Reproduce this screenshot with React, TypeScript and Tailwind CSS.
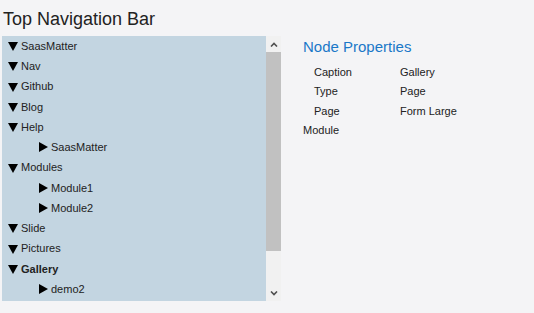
import { Fragment } from 'react';

type Node = { label: string; depth: number; open: boolean; bold?: boolean };

const nodes: Node[] = [
  { label: 'SaasMatter', depth: 0, open: true },
  { label: 'Nav', depth: 0, open: true },
  { label: 'Github', depth: 0, open: true },
  { label: 'Blog', depth: 0, open: true },
  { label: 'Help', depth: 0, open: true },
  { label: 'SaasMatter', depth: 1, open: false },
  { label: 'Modules', depth: 0, open: true },
  { label: 'Module1', depth: 1, open: false },
  { label: 'Module2', depth: 1, open: false },
  { label: 'Slide', depth: 0, open: true },
  { label: 'Pictures', depth: 0, open: true },
  { label: 'Gallery', depth: 0, open: true, bold: true },
  { label: 'demo2', depth: 1, open: false },
];

const props = [
  ['Caption', 'Gallery'],
  ['Type', 'Page'],
  ['Page', 'Form Large'],
];

const App = () => {
  return (
    <div className="min-h-screen w-[534px] h-[313px] bg-[#f4f4f6] text-[#222] font-['Liberation_Sans',Arial,sans-serif] overflow-hidden">
      {/* Header */}
      <h1 className="text-[18px] leading-[22px] pl-[3px] pt-[8px] h-[36px]">Top Navigation Bar</h1>

      <div className="flex">
        {/* Tree */}
        <div className="ml-[2px] flex h-[265px]">
          <div className="w-[264px] bg-[#c3d5e1] overflow-hidden text-[11px]">
            <ul>
              {nodes.map((n, i) => (
                <li
                  key={i}
                  className={`flex items-center h-[20.25px] ${n.depth ? 'pl-[37px]' : 'pl-[6px]'} ${n.bold ? 'font-bold' : ''}`}
                >
                  {n.open ? (
                    <svg width="10" height="9" viewBox="0 0 10 9" className="mr-[3px] mt-[1px] shrink-0">
                      <path d="M0 0 H10 L5 9 Z" fill="#000" />
                    </svg>
                  ) : (
                    <svg width="9" height="10" viewBox="0 0 9 10" className="mr-[3px] shrink-0">
                      <path d="M0 0 V10 L9 5 Z" fill="#000" />
                    </svg>
                  )}
                  <span>{n.label}</span>
                </li>
              ))}
            </ul>
          </div>
          {/* Scrollbar */}
          <div className="w-[15px] bg-[#f1f1f1] flex flex-col">
            <div className="h-[16px] flex items-center justify-center">
              <svg width="8" height="5" viewBox="0 0 8 5">
                <path d="M1 4.5 L4 1.5 L7 4.5" stroke="#505050" strokeWidth="1.6" fill="none" />
              </svg>
            </div>
            <div className="h-[199px] bg-[#c1c1c1]" />
            <div className="flex-1" />
            <div className="h-[16px] flex items-center justify-center">
              <svg width="8" height="5" viewBox="0 0 8 5">
                <path d="M1 0.5 L4 3.5 L7 0.5" stroke="#505050" strokeWidth="1.6" fill="none" />
              </svg>
            </div>
          </div>
        </div>

        {/* Properties */}
        <div className="ml-[22px] text-[11px]">
          <h2 className="text-[15px] leading-[20px] text-[#1a78c8] mt-[1px]">Node Properties</h2>
          <div className="mt-[5px]">
            {props.map(([k, v]) => (
              <Fragment key={k}>
                <div className="flex h-[19.5px] items-center pl-[11px]">
                  <span className="w-[86px]">{k}</span>
                  <span>{v}</span>
                </div>
              </Fragment>
            ))}
            <div className="h-[19.5px] flex items-center">Module</div>
          </div>
        </div>
      </div>
    </div>
  );
};

export default App;
